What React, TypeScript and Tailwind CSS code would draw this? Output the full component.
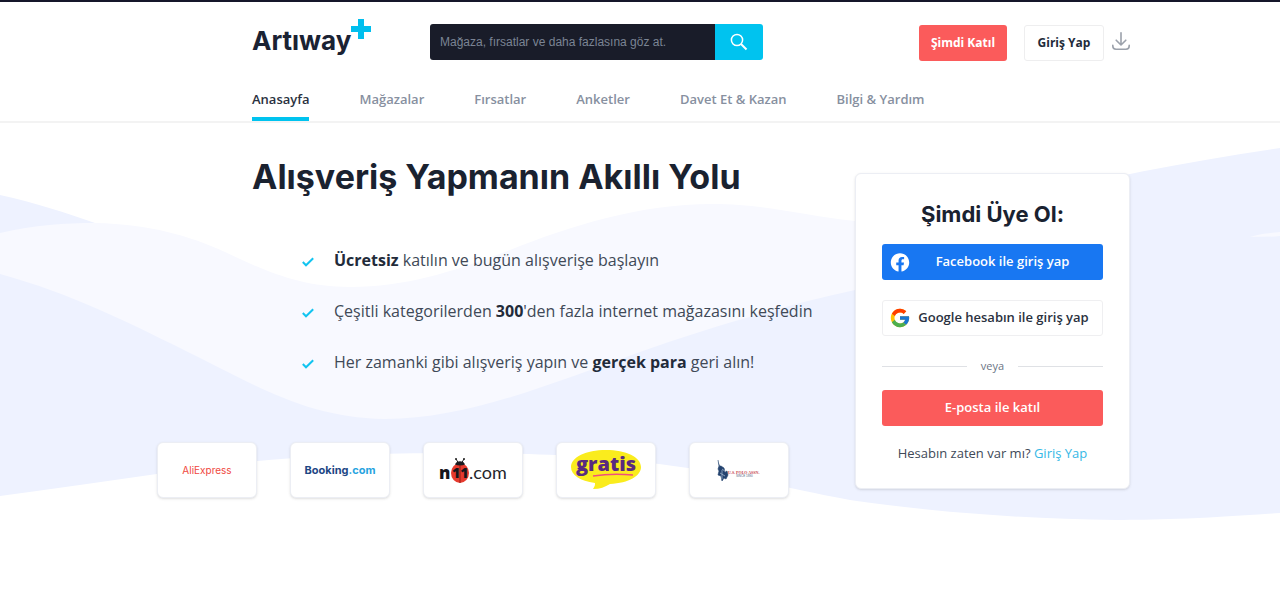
import type { ReactNode } from "react"
import { FaFacebook } from "react-icons/fa"
import { FcGoogle } from "react-icons/fc"

const navItems = ["Anasayfa", "Mağazalar", "Fırsatlar", "Anketler", "Davet Et & Kazan", "Bilgi & Yardım"]

function Logo() {
  return (
    <a href="#" aria-label="Artıway+" className="flex w-[178px] items-start">
      <span className="pt-1 font-[Inter] text-[26px] leading-9 font-bold text-[#1a2233]">Artıway</span>
      <svg viewBox="0 0 20 20" className="h-5 w-5" fill="#00bfee">
        <path d="M7 0h6v7h7v6h-7v7H7v-7H0V7h7z" />
      </svg>
    </a>
  )
}

function SearchIcon() {
  return (
    <svg viewBox="0 0 18 18" className="h-[18px] w-[18px]" fill="none" stroke="currentColor">
      <circle cx="7" cy="7" r="5.600" strokeWidth="1.500" />
      <path d="m11 11 5.500 5.500" strokeWidth="2" />
    </svg>
  )
}

function DownloadIcon() {
  return (
    <svg viewBox="0 0 18 18" className="h-[18px] w-[18px]" fill="none" stroke="#9ba1ab" strokeWidth="1.600" strokeLinecap="round" strokeLinejoin="round">
      <path d="M9 .8v12M4.200 8.200 9 13l4.800-4.800M.8 13.200v.8c0 2 1.200 3.200 3.200 3.200h10c2 0 3.200-1.200 3.200-3.200v-.8" />
    </svg>
  )
}

function Header() {
  return (
    <header className="border-t-2 border-b-2 border-t-[#15162a] border-b-[#f3f3f3] bg-white pr-[150px] pl-[252px]">
      <div className="flex items-start pt-[17px]">
        <Logo />
        <form className="mt-[5px] flex h-9 w-[333px] overflow-hidden rounded-[3px]">
          <input
            type="search"
            aria-label="Ara"
            placeholder="Mağaza, fırsatlar ve daha fazlasına göz at."
            className="min-w-0 flex-1 bg-[#191c29] px-2.5 font-['Liberation_Sans'] text-xs text-white outline-none placeholder:text-[#7b8494]"
          />
          <button type="button" aria-label="Ara" className="flex w-12 items-center justify-center bg-[#00c3ef] text-white">
            <SearchIcon />
          </button>
        </form>
        <div className="mt-1.5 ml-auto flex items-center">
          <button className="h-9 w-[88px] rounded-[3px] bg-[#fb5b5b] text-xs font-bold text-white">Şimdi Katıl</button>
          <button className="mr-2 ml-[17px] h-9 w-20 rounded-[3px] border border-[#eeeeef] text-xs font-bold text-[#222b3a]">Giriş Yap</button>
          <button aria-label="İndir" className="pb-1">
            <DownloadIcon />
          </button>
        </div>
      </div>
      <nav className="mt-7 flex gap-[50px] text-[13px] leading-5 font-semibold text-[#8790a0]">
        {navItems.map((item, i) => (
          <a key={item} href="#" className={i === 0 ? "border-b-4 border-[#00c3ef] pb-2 text-[#2a3140]" : "pb-3"}>
            {item}
          </a>
        ))}
      </nav>
    </header>
  )
}

function Waves() {
  return (
    <svg viewBox="0 123 1280 400" preserveAspectRatio="none" className="absolute inset-x-0 top-0 -z-10 h-[400px] w-full">
      <path
        fill="#eef2ff"
        d="M0 195C36 203 66 213 95 223C180 255 250 330 350 330C560 330 800 267 960 216C1060 186 1170 164 1280 148V513C1200 519 1150 520 1117 520C1010 519 910 509 850 500C780 487 740 475 688 468C600 455 530 453 460 453C400 453 330 454 258 461C170 471 90 484 0 496Z"
      />
      {/* paler band crossing the main wave */}
      <path
        fill="#f8f9ff"
        d="M0 233C35 225 65 223 95 223C150 224 190 236 225 252C265 271 300 287 350 287C410 287 460 269 510 250C570 226 640 204 712 204C765 204 800 215 855 221L920 232V270L855 290C790 304 710 327 640 352C560 380 470 419 385 419C310 418 260 388 200 358C130 323 70 293 0 274Z"
      />
      <path fill="#f8f9ff" d="M1250 237C1260 234 1270 233 1280 232V236C1270 237 1260 237 1250 237Z" />
    </svg>
  )
}

function Benefit({ children }: { children: ReactNode }) {
  return (
    <li className="flex items-center gap-5">
      <svg viewBox="0 0 12 10" className="mt-1 h-2.5 w-3" fill="none" stroke="#12c4f0" strokeWidth="2">
        <path d="M.8 5 4 8.300 11.200 1.200" />
      </svg>
      <span>{children}</span>
    </li>
  )
}

function AliExpress() {
  return <span className="font-[Inter] text-[10px] text-[#f0483e]">AliExpress</span>
}

function Booking() {
  return (
    <span className="font-[Inter] text-[11px] font-bold text-[#1d4684]">
      Booking<span className="text-[#27a3e0]">.com</span>
    </span>
  )
}

function N11() {
  return (
    <svg viewBox="0 -2 70 30" className="h-[30px] w-[70px]" role="img" aria-label="n11.com">
      <path d="m18 2 3 5m5-5-3 5" stroke="#222" fill="none" />
      <circle cx="18" cy="2" r="1" fill="#222" />
      <circle cx="26" cy="2" r="1" fill="#222" />
      <ellipse cx="22" cy="16" rx="9" ry="10" fill="#e63a2e" />
      <path d="M17 7.500c1-4.500 9-4.500 10 0-3 1.200-7 1.200-10 0z" fill="#1b1b20" />
      <path d="M22 8v18" stroke="#7c1712" strokeWidth=".8" />
      <text x="1" y="22" fontFamily="Open Sans, sans-serif" fontWeight="800" fontSize="17" fill="#16161c">n</text>
      <text x="14" y="21" fontFamily="Open Sans, sans-serif" fontWeight="800" fontSize="14" fill="#16161c">11</text>
      <text x="31" y="22" fontFamily="Lato, sans-serif" fontSize="18" fill="#26262c">.com</text>
    </svg>
  )
}

function Gratis() {
  return (
    <svg viewBox="0 0 72 42" className="h-[42px] w-[72px]" role="img" aria-label="gratis">
      <path d="M36 1C16 1 1 8 1 18c0 8 9 14 24 16 0 2 0 3-2 6 7 0 12-2 17-5 19-1 31-8 31-17C71 8 56 1 36 1z" fill="#faec1d" />
      <text x="36" y="22" textAnchor="middle" fontFamily="Open Sans, sans-serif" fontWeight="800" fontSize="20" fill="#592a80">gratis</text>
      <path d="M23 27q19-3 40-1" stroke="#f0507c" strokeWidth="1.500" fill="none" />
    </svg>
  )
}

function PoloAssn() {
  return (
    <svg viewBox="0 0 46 22" className="h-[22px] w-[46px]" role="img" aria-label="U.S. Polo Assn.">
      <path d="m2 1 1 6 1 1m1-1 3 2 1 4 2-1 1 4-2 4-2-1-2 3-1-5-3-1 1-4-1-2 1-3z" fill="#24436f" stroke="#24436f" strokeWidth=".6" />
      <path d="m6 10 4 3M4 14l5 3m-3-6v9" stroke="#9fb3cc" strokeWidth=".8" />
      <text x="12" y="15" fontFamily="Liberation Serif, serif" fontWeight="700" fontSize="4" fill="#c4414a">U.S. POLO ASSN.</text>
      <text x="20" y="18" fontFamily="Liberation Sans, sans-serif" fontSize="3" fill="#52657f">SINCE 1890</text>
    </svg>
  )
}

const brands = [
  { name: "aliexpress", logo: <AliExpress /> },
  { name: "booking", logo: <Booking /> },
  { name: "n11", logo: <N11 /> },
  { name: "gratis", logo: <Gratis /> },
  { name: "polo", logo: <PoloAssn /> },
]

function SignUpCard() {
  return (
    <section className="mt-[50px] w-[275px] shrink-0 rounded-md border border-[#eceef4] bg-white px-[26px] pt-6 pb-[25px] text-center text-[13px] shadow-sm">
      <h2 className="font-[Inter] text-[22px] leading-8 font-bold text-[#1a2230]">Şimdi Üye Ol:</h2>
      <button className="mt-3.5 flex h-9 w-full items-center rounded-[3px] bg-[#1877f2] px-2 font-semibold text-white">
        <FaFacebook className="h-[19px] w-5" />
        <span className="flex-1">Facebook ile giriş yap</span>
      </button>
      <button className="mt-5 flex h-9 w-full items-center rounded-[3px] border border-[#efeff1] px-1.5 font-semibold text-[#2a3140]">
        <FcGoogle className="h-[22px] w-[22px]" />
        <span className="flex-1">Google hesabın ile giriş yap</span>
      </button>
      <div className="mt-5 flex h-5 items-center gap-3.5 text-[11px] text-[#6b7585]">
        <span className="h-px flex-1 bg-[#dfe1e5]" />
        veya
        <span className="h-px flex-1 bg-[#dfe1e5]" />
      </div>
      <button className="mt-3.5 h-9 w-full rounded-[3px] bg-[#fb5b5b] font-semibold text-white">E-posta ile katıl</button>
      <p className="mt-[17px] leading-5 text-[#404957]">
        Hesabın zaten var mı? <a href="#" className="text-[#35b8e6]">Giriş Yap</a>
      </p>
    </section>
  )
}

export default function App() {
  return (
    <div className="min-h-screen bg-white font-['Open_Sans',sans-serif]">
      <Header />
      <main className="relative isolate flex items-start pr-[150px] pb-10 pl-[157px]">
        <Waves />
        <div className="flex-1">
          <h1 className="pt-8 pl-[95px] font-[Inter] text-[34px] leading-11 font-bold text-[#1a2230]">Alışveriş Yapmanın Akıllı Yolu</h1>
          <ul className="mt-[49px] flex flex-col gap-[27px] pl-[145px] text-base leading-6 text-[#404957] [&_b]:text-[#222b3a]">
            <Benefit>
              <b>Ücretsiz</b> katılın ve bugün alışverişe başlayın
            </Benefit>
            <Benefit>
              Çeşitli kategorilerden <b>300</b>'den fazla internet mağazasını keşfedin
            </Benefit>
            <Benefit>
              Her zamanki gibi alışveriş yapın ve <b>gerçek para</b> geri alın!
            </Benefit>
          </ul>
          <div className="mt-[68px] flex gap-[33px]">
            {brands.map((brand) => (
              <a key={brand.name} href="#" className="flex h-14 w-[100px] items-center justify-center rounded-md border border-[#eceef4] bg-white shadow-sm">
                {brand.logo}
              </a>
            ))}
          </div>
        </div>
        <SignUpCard />
      </main>
    </div>
  )
}
